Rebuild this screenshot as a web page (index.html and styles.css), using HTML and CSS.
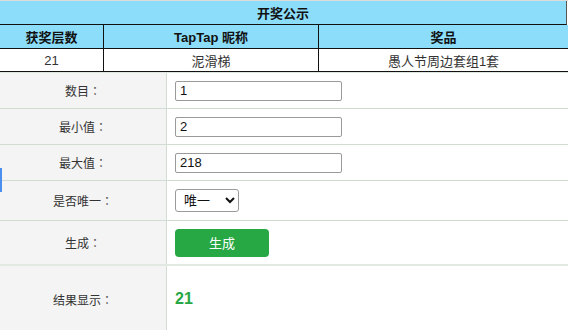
FILE: index.html
```html
<!DOCTYPE html>
<html lang="zh">
<head>
<meta charset="utf-8">
<title>开奖公示</title>
<link rel="stylesheet" href="styles.css">
</head>
<body>
<div class="page">
  <div class="prize">
    <div class="title">开奖公示</div>
    <div class="row head">
      <div class="cell c1">获奖层数</div>
      <div class="cell c2">TapTap 昵称</div>
      <div class="cell c3">奖品</div>
    </div>
    <div class="row data">
      <div class="cell c1">21</div>
      <div class="cell c2">泥滑梯</div>
      <div class="cell c3">愚人节周边套组1套</div>
    </div>
  </div>
  <div class="form">
    <div class="frow r1">
      <div class="label">数目<span class="colon">：</span></div>
      <div class="value"><input class="field" type="text" value="1"></div>
    </div>
    <div class="frow r2">
      <div class="label">最小值<span class="colon">：</span></div>
      <div class="value"><input class="field" type="text" value="2"></div>
    </div>
    <div class="frow r3">
      <div class="label">最大值<span class="colon">：</span></div>
      <div class="value"><input class="field" type="text" value="218"></div>
    </div>
    <div class="frow r4">
      <div class="label">是否唯一<span class="colon">：</span></div>
      <div class="value"><select class="pick"><option>唯一</option><option>不唯一</option></select></div>
    </div>
    <div class="frow r5">
      <div class="label">生成<span class="colon">：</span></div>
      <div class="value"><button class="btn" type="button">生成</button></div>
    </div>
    <div class="frow r6">
      <div class="label">结果显示<span class="colon">：</span></div>
      <div class="value"><span class="result">21</span></div>
    </div>
  </div>
  <div class="edge-mark"></div>
</div>
</body>
</html>
```
FILE: styles.css
```css
html, body {
  margin: 0;
  padding: 0;
  background: #fff;
}
body {
  font-family: "Liberation Sans", "Noto Sans CJK SC", sans-serif;
  font-size: 13px;
  color: #222;
}
.page {
  position: relative;
  width: 568px;
}
.prize {
  border-top: 1px solid #dcdcdc;
}
.title {
  height: 23px;
  background: #8cddf9;
  border-bottom: 1px solid #111;
  border-right: 1px solid #555;
  margin-right: 1px;
  display: flex;
  align-items: center;
  justify-content: center;
  font-weight: bold;
  font-size: 13px;
  color: #111;
}
.row {
  display: flex;
  border-bottom: 1px solid #111;
}
.head {
  height: 23px;
  background: #8cddf9;
  font-weight: bold;
  color: #111;
}
.data {
  height: 22px;
  background: #fff;
  color: #333;
}
.cell {
  display: flex;
  align-items: center;
  justify-content: center;
  box-sizing: border-box;
}
.c1 {
  width: 104px;
  border-right: 1px solid #111;
}
.c2 {
  width: 215px;
  border-right: 1px solid #111;
}
.c3 {
  flex: 1;
}
.form {
  border-top: 1px solid #dfe6df;
}
.frow {
  display: flex;
  border-bottom: 1px solid #d2dcd2;
}
.label {
  width: 167px;
  box-sizing: border-box;
  border-right: 1px solid #d2dcd2;
  background: #f4f4f4;
  display: flex;
  align-items: center;
  justify-content: center;
  font-size: 12px;
  color: #333;
}
.colon {
  font-family: "Noto Sans CJK TC", sans-serif;
  color: #555;
}
.value {
  flex: 1;
  display: flex;
  align-items: center;
  padding-left: 8px;
}
.r1 { height: 35px; }
.r2 { height: 35px; }
.r3 { height: 35px; }
.r4 { height: 39px; }
.r5 { height: 43px; border-bottom: 2px solid #e2e9e2; }
.r6 { height: 66px; border-bottom: none; }
.field {
  box-sizing: border-box;
  width: 167px;
  height: 20px;
  margin: 0;
  padding: 0 4px;
  border: 1px solid #9a9a9a;
  border-radius: 2px;
  font-family: "Liberation Sans", "Noto Sans CJK SC", sans-serif;
  font-size: 13px;
  color: #111;
  background: #fff;
}
.pick {
  box-sizing: border-box;
  width: 64px;
  height: 23px;
  margin: 0;
  padding: 0 4px;
  border: 1px solid #9a9a9a;
  border-radius: 3px;
  font-family: "Liberation Sans", "Noto Sans CJK SC", sans-serif;
  font-size: 13px;
  color: #111;
  background: #fff;
}
.btn {
  width: 94px;
  height: 28px;
  margin: 0;
  border: none;
  border-radius: 4px;
  background: #28a745;
  color: #fff;
  font-family: "Liberation Sans", "Noto Sans CJK SC", sans-serif;
  font-size: 13px;
}
.result {
  color: #28a745;
  font-weight: bold;
  font-size: 16px;
}
.edge-mark {
  position: absolute;
  left: 0;
  top: 168px;
  width: 2px;
  height: 24px;
  background: #4a8ff0;
}
```
